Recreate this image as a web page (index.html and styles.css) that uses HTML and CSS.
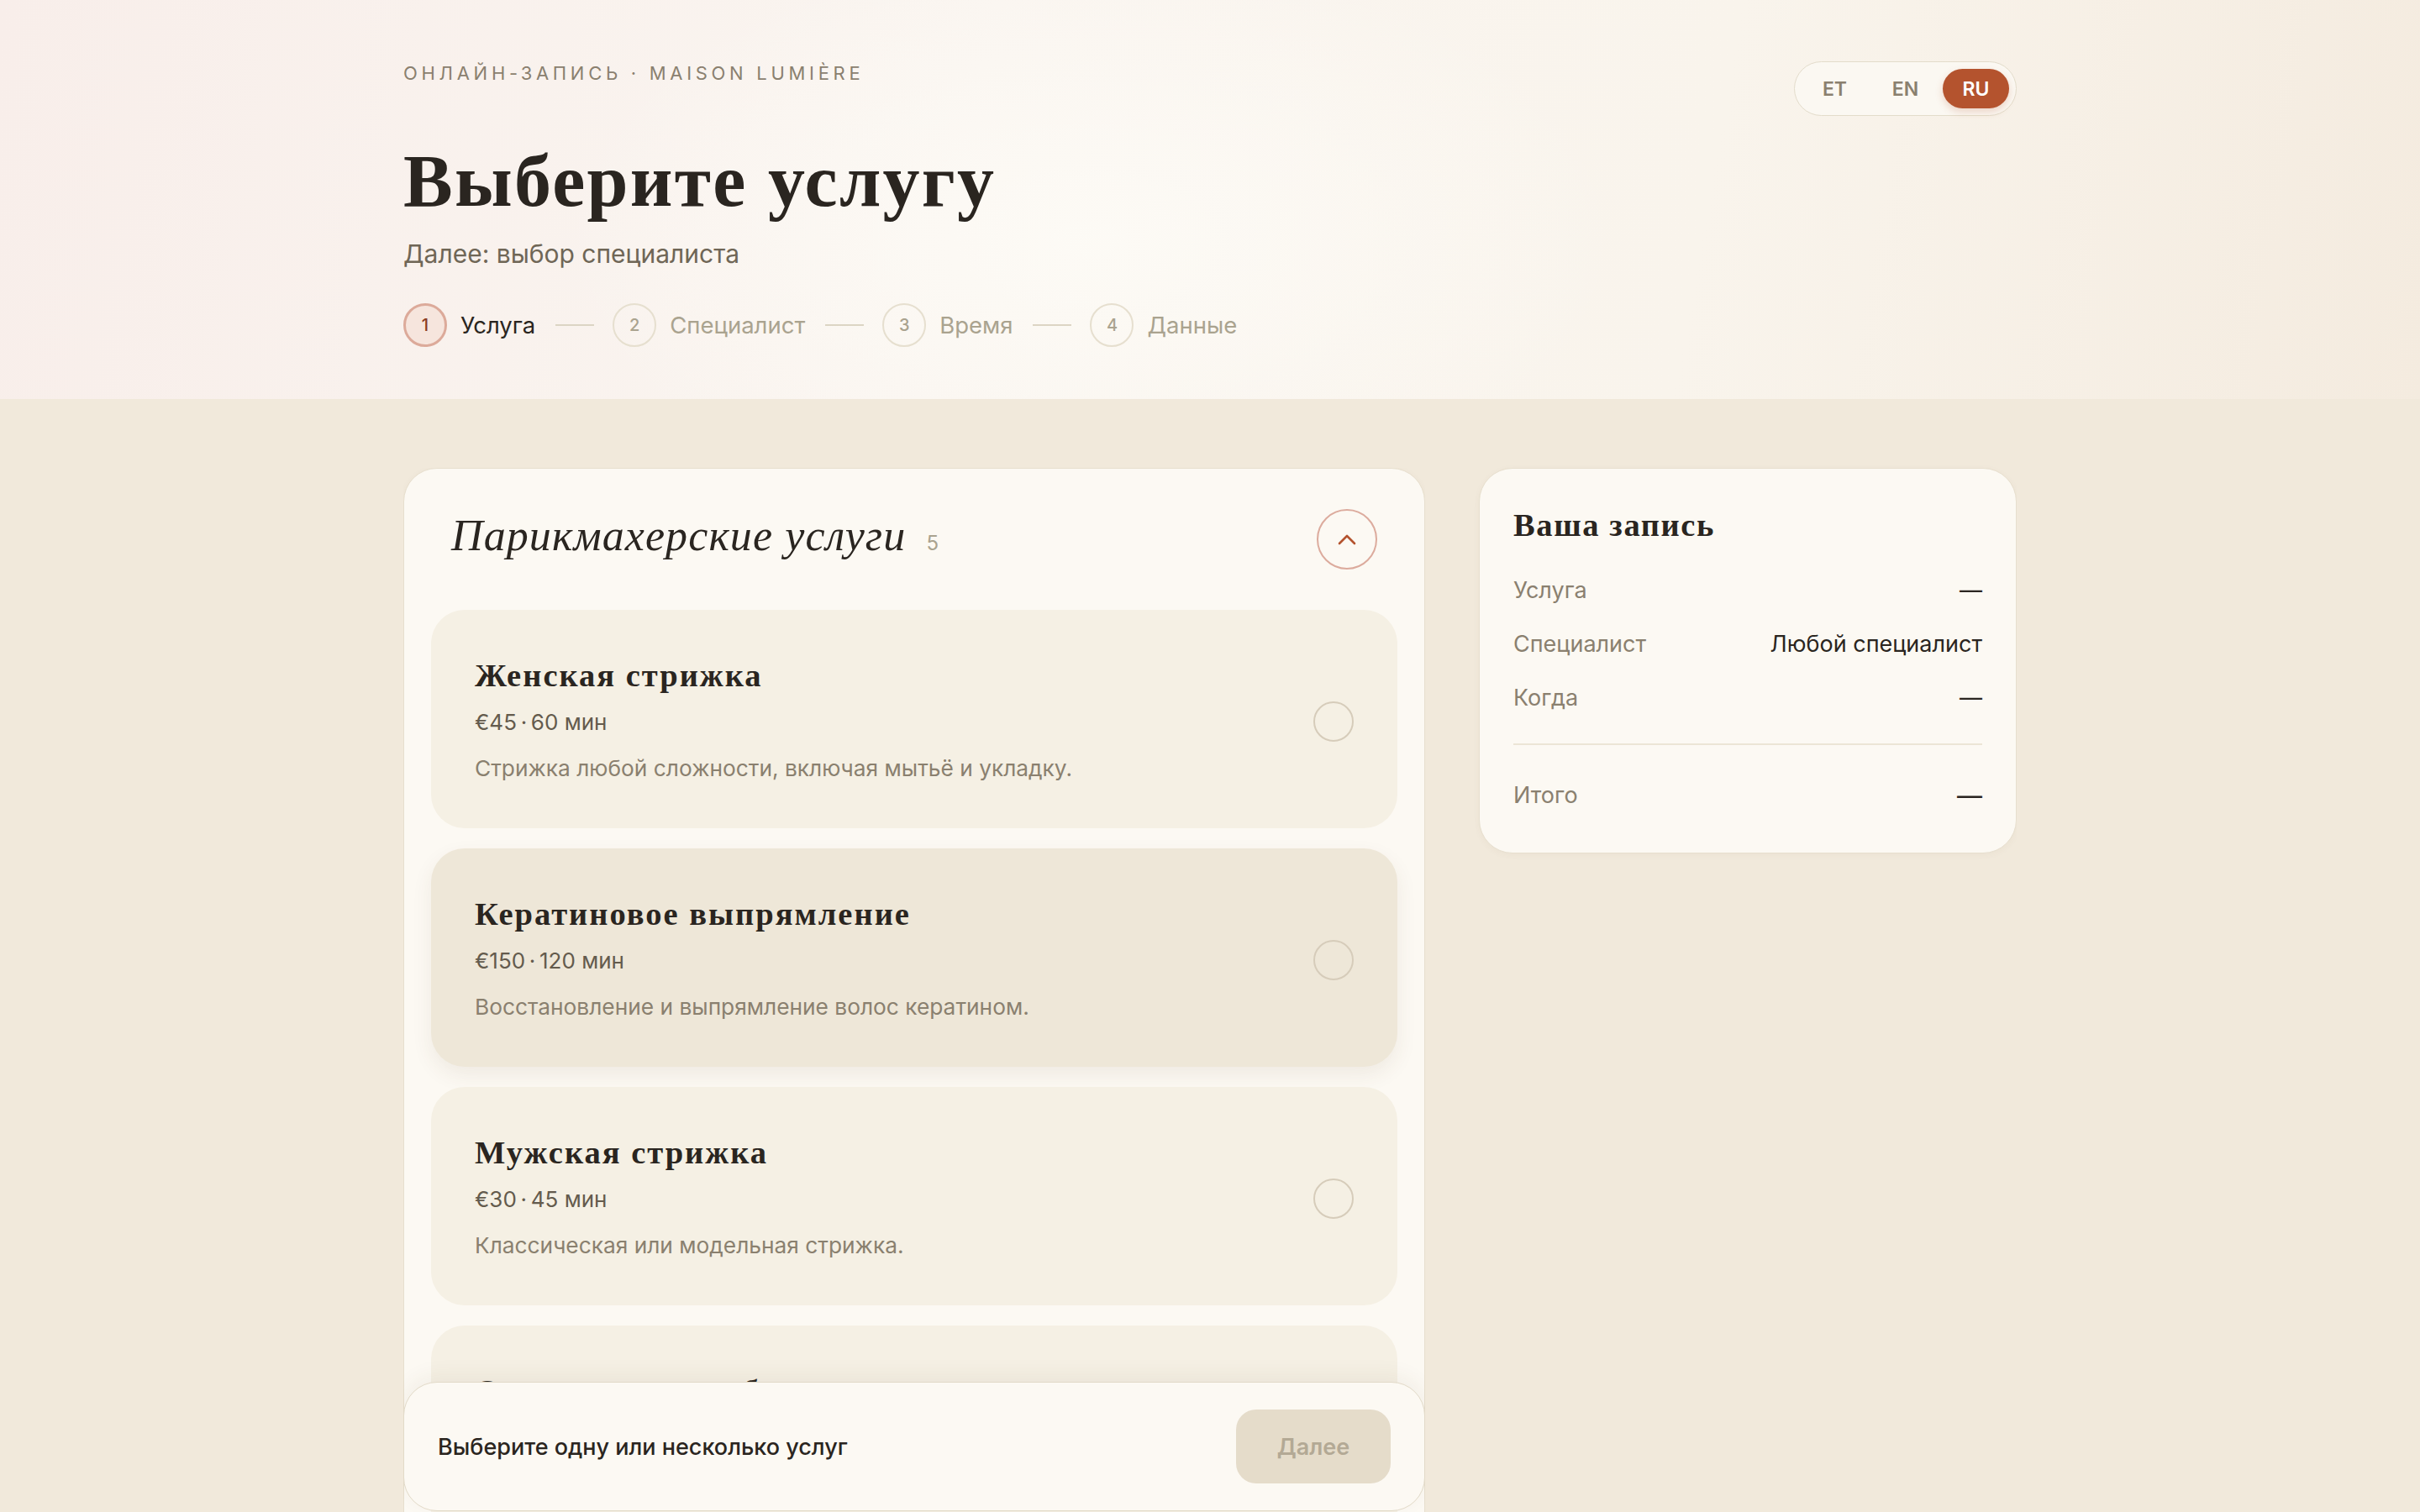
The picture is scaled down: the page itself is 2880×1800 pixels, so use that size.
FILE: index.html
```html
<!DOCTYPE html>
<html lang="ru">
<head>
<meta charset="utf-8">
<title>Онлайн-запись · Maison Lumière</title>
<link rel="stylesheet" href="styles.css">
</head>
<body>
<header class="hero">
  <div class="wrap hero-inner">
    <div class="hero-main">
      <p class="eyebrow">Онлайн-запись · Maison Lumière</p>
      <h1 class="page-title">Выберите услугу</h1>
      <p class="page-sub">Далее: выбор специалиста</p>
      <ol class="steps">
        <li class="step is-current"><span class="step-num">1</span><span class="step-label">Услуга</span></li>
        <li class="step-sep" aria-hidden="true"></li>
        <li class="step"><span class="step-num">2</span><span class="step-label">Специалист</span></li>
        <li class="step-sep" aria-hidden="true"></li>
        <li class="step"><span class="step-num">3</span><span class="step-label">Время</span></li>
        <li class="step-sep" aria-hidden="true"></li>
        <li class="step"><span class="step-num">4</span><span class="step-label">Данные</span></li>
      </ol>
    </div>
    <nav class="lang" aria-label="Язык">
      <button class="lang-btn" type="button">ET</button>
      <button class="lang-btn" type="button">EN</button>
      <button class="lang-btn is-active" type="button">RU</button>
    </nav>
  </div>
</header>

<main class="wrap layout">
  <div class="col-main">
    <section class="card services">
      <div class="group-head">
        <h2 class="group-title">Парикмахерские услуги <span class="group-count">5</span></h2>
        <button class="collapse" type="button" aria-label="Свернуть">
          <svg width="22" height="14" viewBox="0 0 22 14" fill="none"><polyline points="2,12 11,3 20,12" stroke="#b4532e" stroke-width="2.6" stroke-linecap="round" stroke-linejoin="round"/></svg>
        </button>
      </div>
      <ul class="service-list">
        <li class="service">
          <div class="service-body">
            <h3 class="service-name">Женская стрижка</h3>
            <p class="service-meta">€45&thinsp;·&thinsp;60 мин</p>
            <p class="service-desc">Стрижка любой сложности, включая мытьё и укладку.</p>
          </div>
          <span class="radio"></span>
        </li>
        <li class="service is-hover">
          <div class="service-body">
            <h3 class="service-name">Кератиновое выпрямление</h3>
            <p class="service-meta">€150&thinsp;·&thinsp;120 мин</p>
            <p class="service-desc">Восстановление и выпрямление волос кератином.</p>
          </div>
          <span class="radio"></span>
        </li>
        <li class="service">
          <div class="service-body">
            <h3 class="service-name">Мужская стрижка</h3>
            <p class="service-meta">€30&thinsp;·&thinsp;45 мин</p>
            <p class="service-desc">Классическая или модельная стрижка.</p>
          </div>
          <span class="radio"></span>
        </li>
        <li class="service">
          <div class="service-body">
            <h3 class="service-name">Окрашивание и блондирование</h3>
            <p class="service-meta">€95&thinsp;·&thinsp;150 мин</p>
            <p class="service-desc">Однотонное окрашивание, мелирование или сложный блонд.</p>
          </div>
          <span class="radio"></span>
        </li>
        <li class="service">
          <div class="service-body">
            <h3 class="service-name">Укладка</h3>
            <p class="service-meta">€35&thinsp;·&thinsp;40 мин</p>
            <p class="service-desc">Укладка феном или локоны к особому случаю.</p>
          </div>
          <span class="radio"></span>
        </li>
      </ul>
    </section>

    <div class="action-bar">
      <span class="action-text">Выберите одну или несколько услуг</span>
      <button class="next-btn" type="button" disabled>Далее</button>
    </div>
  </div>

  <aside class="card summary">
    <h2 class="summary-title">Ваша запись</h2>
    <dl class="summary-list">
      <div class="summary-row"><dt>Услуга</dt><dd>—</dd></div>
      <div class="summary-row"><dt>Специалист</dt><dd>Любой специалист</dd></div>
      <div class="summary-row"><dt>Когда</dt><dd>—</dd></div>
    </dl>
    <div class="summary-divider"></div>
    <div class="summary-row summary-total"><span>Итого</span><span class="total-value">—</span></div>
  </aside>
</main>
</body>
</html>
```

FILE: styles.css
```css
html,
body {
  height: 100%;
  overflow: hidden;
}

body {
  margin: 0;
  display: flex;
  flex-direction: column;
  background: #f1e9db;
  font-family: Inter, "Noto Sans", sans-serif;
  color: #2a2520;
}

.wrap {
  width: 1920px;
  margin: 0 auto;
  box-sizing: border-box;
}

/* ---------- hero ---------- */
.hero {
  flex: none;
  background:
    radial-gradient(ellipse 900px 500px at 45% 60%, rgba(253, 251, 246, 0.9), rgba(253, 251, 246, 0) 70%),
    linear-gradient(100deg, #f8eeea 0%, #faf5f0 40%, #f9f4ec 70%, #f4ebdf 100%);
  padding: 72px 0 62px;
}

.hero-inner {
  display: flex;
  justify-content: space-between;
  align-items: flex-start;
}

.eyebrow {
  margin: 0;
  font-size: 22px;
  line-height: 31px;
  letter-spacing: 4.7px;
  text-transform: uppercase;
  color: #8a806f;
}

.page-title {
  margin: 67px 0 0;
  font-family: "Liberation Serif", "DejaVu Serif", serif;
  font-weight: 700;
  font-size: 88px;
  line-height: 92px;
  letter-spacing: 2.3px;
  color: #2a2520;
}

.page-sub {
  margin: 21px 0 0;
  font-size: 30px;
  line-height: 39px;
  color: #6f6656;
}

.steps {
  list-style: none;
  margin: 39px 0 0;
  padding: 0;
  display: flex;
  align-items: center;
}

.step {
  display: flex;
  align-items: center;
  gap: 16px;
}

.step-num {
  width: 52px;
  height: 52px;
  box-sizing: border-box;
  border: 2px solid #e6dfcf;
  border-radius: 50%;
  display: flex;
  align-items: center;
  justify-content: center;
  font-size: 20px;
  font-weight: 500;
  color: #aaa38f;
}

.step-label {
  font-size: 27.5px;
  color: #aaa38f;
}

.step.is-current .step-num {
  border: 3px solid #dcaa9a;
  background: #f6e5dd;
  color: #8b3b24;
}

.step.is-current .step-label {
  color: #2a2520;
}

.step-sep {
  width: 46px;
  height: 2px;
  background: #dcd5c4;
  margin: 0 22px 0 24px;
}

.lang {
  display: flex;
  gap: 5px;
  padding: 8px;
  margin-top: 1px;
  border: 1px solid #e3dccb;
  border-radius: 999px;
  background: #fbf8f2;
}

.lang-btn {
  width: 79px;
  height: 47px;
  border: 0;
  border-radius: 999px;
  background: transparent;
  font-family: Inter, sans-serif;
  font-size: 23px;
  font-weight: 600;
  color: #8a806f;
  padding: 0;
}

.lang-btn.is-active {
  background: #b4532e;
  color: #fff;
  box-shadow: 0 4px 10px rgba(180, 83, 46, 0.22);
}

/* ---------- main layout ---------- */
.layout {
  flex: 1;
  min-height: 0;
  overflow: hidden;
  display: grid;
  grid-template-columns: 1216px 640px;
  gap: 64px;
  padding-top: 82px;
}

.col-main {
  position: relative;
  min-height: 0;
  overflow: hidden;
}

.card {
  background: #fcf9f3;
  border: 1px solid #e7dfce;
  border-radius: 40px;
  box-shadow: 0 2px 8px rgba(90, 70, 40, 0.04);
}

.services {
  padding: 32px;
}

.group-head {
  display: flex;
  align-items: center;
  justify-content: space-between;
  padding: 16px 24px;
  margin-bottom: 32px;
}

.group-title {
  margin: 0;
  font-family: "Liberation Serif", "DejaVu Serif", serif;
  font-style: italic;
  font-weight: 400;
  font-size: 52px;
  line-height: 60px;
  letter-spacing: 1.1px;
  color: #2a2520;
}

.group-count {
  font-family: Inter, sans-serif;
  font-style: normal;
  font-size: 24px;
  letter-spacing: 0;
  color: #aaa38f;
  margin-left: 10px;
}

.collapse {
  width: 72px;
  height: 72px;
  border: 2px solid #dcab9d;
  border-radius: 50%;
  background: transparent;
  display: flex;
  align-items: center;
  justify-content: center;
  padding: 0;
}

.service-list {
  list-style: none;
  margin: 0;
  padding: 0;
  display: flex;
  flex-direction: column;
  gap: 24px;
}

.service {
  display: flex;
  align-items: center;
  justify-content: space-between;
  padding: 57px 52px 52px;
  background: #f5f0e4;
  border-radius: 40px;
}

.service.is-hover {
  background: #eee7d8;
  box-shadow: 0 10px 24px rgba(90, 70, 40, 0.08);
}

.service-name {
  margin: 0 0 15px;
  font-family: "Liberation Serif", "DejaVu Serif", serif;
  font-weight: 700;
  font-size: 38.5px;
  line-height: 43px;
  letter-spacing: 2px;
  color: #2a2520;
}

.service-meta {
  margin: 0 0 17px;
  font-size: 26px;
  line-height: 37px;
  color: #645b4d;
}

.service-desc {
  margin: 0;
  font-size: 26.3px;
  line-height: 39px;
  color: #8a806f;
}

.radio {
  flex: none;
  width: 48px;
  height: 48px;
  box-sizing: border-box;
  border: 2px solid #d6ccba;
  border-radius: 50%;
}

/* action bar pinned over the bottom of the list */
.action-bar {
  position: absolute;
  left: 0;
  right: 0;
  bottom: 1px;
  display: flex;
  align-items: center;
  justify-content: space-between;
  padding: 32px 40px;
  background: #fcf9f3;
  border: 1px solid #e2dac8;
  border-radius: 40px;
  box-shadow: 0 -8px 24px rgba(90, 70, 40, 0.06);
}

.action-text {
  font-size: 27px;
  font-weight: 500;
  color: #2a2520;
}

.next-btn {
  width: 184px;
  height: 88px;
  border: 0;
  border-radius: 24px;
  background: #e5dcca;
  color: #b3a995;
  font-family: Inter, sans-serif;
  font-size: 27px;
  font-weight: 600;
  padding: 0;
}

/* ---------- summary ---------- */
.summary {
  align-self: start;
  padding: 46px 40px 36px;
}

.summary-title {
  margin: 0 0 24px;
  font-family: "Liberation Serif", "DejaVu Serif", serif;
  font-weight: 700;
  font-size: 38.5px;
  line-height: 43px;
  letter-spacing: 1.6px;
  color: #2a2520;
}

.summary-list {
  margin: 0;
}

.summary-row {
  display: flex;
  justify-content: space-between;
  align-items: center;
  padding: 14px 0;
  font-size: 27px;
  line-height: 36px;
}

.summary-row dt,
.summary-total > span:first-child {
  color: #8a806f;
}

.summary-row dd {
  margin: 0;
  color: #2a2520;
}

.summary-divider {
  height: 2px;
  background: #ece5d6;
  margin: 22px 0 28px;
}

.total-value {
  font-size: 30px;
  color: #2a2520;
}
```
